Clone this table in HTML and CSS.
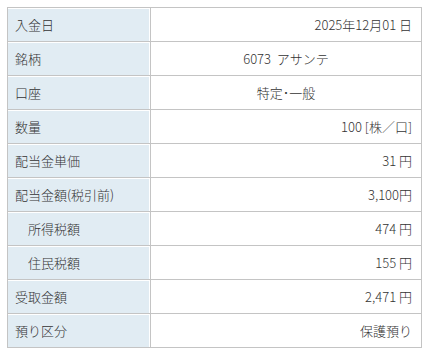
FILE: index.html
```html
<!DOCTYPE html>
<html lang="ja">
<head>
<meta charset="utf-8">
<link rel="stylesheet" href="styles.css">
</head>
<body>
<table class="detail">
  <tr><th>入金日</th><td>2025年12月01 日</td></tr>
  <tr><th>銘柄</th><td class="center">6073&nbsp;&nbsp;アサンテ</td></tr>
  <tr><th>口座</th><td class="center">特定･一般</td></tr>
  <tr><th>数量</th><td>100 [株／口]</td></tr>
  <tr><th>配当金単価</th><td>31 円</td></tr>
  <tr><th>配当金額(税引前)</th><td>3,100円</td></tr>
  <tr><th class="indent">所得税額</th><td>474 円</td></tr>
  <tr><th class="indent">住民税額</th><td>155 円</td></tr>
  <tr><th>受取金額</th><td>2,471 円</td></tr>
  <tr><th>預り区分</th><td>保護預り</td></tr>
</table>
</body>
</html>
```

FILE: styles.css
```css
html, body {
  margin: 0;
  padding: 0;
  background: #fff;
}
body {
  padding: 7px;
  font-family: "Noto Sans CJK JP", "Noto Sans", sans-serif;
  font-size: 13px;
  font-weight: 300;
  color: #333;
}
.detail {
  border-collapse: collapse;
  width: 415px;
  table-layout: fixed;
}
.detail tr {
  height: 34px;
}
.detail th,
.detail td {
  border: 1px solid #c4c4c4;
  padding: 0;
  line-height: 33px;
  height: 33px;
  box-sizing: border-box;
  font-weight: 300;
  white-space: nowrap;
}
.detail th {
  width: 143px;
  text-align: left;
  padding-left: 7px;
  background: #e1ecf3;
  box-shadow: inset 0 1px 0 #fff, inset -1px 0 0 #fff;
}
.detail th.indent {
  padding-left: 20px;
}
.detail td {
  text-align: right;
  padding-right: 9px;
}
.detail td.center {
  text-align: center;
  padding-right: 0;
}
```
